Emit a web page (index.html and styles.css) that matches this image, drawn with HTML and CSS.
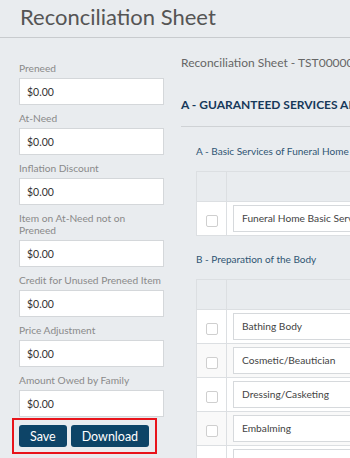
FILE: index.html
```html
<!DOCTYPE html>
<html>

<head>
  <meta name="viewport" content="width=device-width, initial-scale=1">
  <title>Reconciliation Sheet</title>
  <link rel="stylesheet" href="styles.css">
</head>

<body>
  <div class="page-header">
    <h1>Reconciliation Sheet</h1>
  </div>

  <div class="layout">
    <div class="sidebar">
      <div class="field">
        <label>Preneed</label>
        <input type="text" value="$0.00">
      </div>
      <div class="field">
        <label>At-Need</label>
        <input type="text" value="$0.00">
      </div>
      <div class="field">
        <label>Inflation Discount</label>
        <input type="text" value="$0.00">
      </div>
      <div class="field">
        <label>Item on At-Need not on Preneed</label>
        <input type="text" value="$0.00">
      </div>
      <div class="field">
        <label>Credit for Unused Preneed Item</label>
        <input type="text" value="$0.00">
      </div>
      <div class="field">
        <label>Price Adjustment</label>
        <input type="text" value="$0.00">
      </div>
      <div class="field">
        <label>Amount Owed by Family</label>
        <input type="text" value="$0.00">
      </div>

      <div class="actions">
        <button type="button">Save</button>
        <button type="button">Download</button>
      </div>
    </div>

    <div class="content">
      <div class="sheet-title">Reconciliation Sheet - TST0000000001</div>
      <h3 class="section-title">A - GUARANTEED SERVICES AND MERCHANDISE</h3>

      <div class="group-title">A - Basic Services of Funeral Home and Staff</div>
      <table class="items">
        <tr class="head">
          <th class="col-check"></th>
          <th></th>
        </tr>
        <tr>
          <td class="col-check"><span class="check"></span></td>
          <td><div class="item-input">Funeral Home Basic Services</div></td>
        </tr>
      </table>

      <div class="group-title">B - Preparation of the Body</div>
      <table class="items">
        <tr class="head">
          <th class="col-check"></th>
          <th></th>
        </tr>
        <tr>
          <td class="col-check"><span class="check"></span></td>
          <td><div class="item-input">Bathing Body</div></td>
        </tr>
        <tr>
          <td class="col-check"><span class="check"></span></td>
          <td><div class="item-input">Cosmetic/Beautician</div></td>
        </tr>
        <tr>
          <td class="col-check"><span class="check"></span></td>
          <td><div class="item-input">Dressing/Casketing</div></td>
        </tr>
        <tr>
          <td class="col-check"><span class="check"></span></td>
          <td><div class="item-input">Embalming</div></td>
        </tr>
        <tr>
          <td class="col-check"><span class="check"></span></td>
          <td><div class="item-input">Refrigeration</div></td>
        </tr>
      </table>
    </div>
  </div>
</body>

</html>
```

FILE: styles.css
```css
body {
  font-family: Lato, "Open Sans", Arial, sans-serif;
  margin: 0;
  background-color: #e9ecef;
  overflow: hidden;
}

.page-header {
  height: 37px;
  border-bottom: 1px solid #c8cbce;
  padding-left: 20px;
}

h1 {
  margin: 0;
  font-size: 22px;
  font-weight: normal;
  line-height: 34px;
  color: #555;
}

.layout {
  display: flex;
}

.sidebar {
  width: 146px;
  flex-shrink: 0;
  padding: 24px 0 0 19px;
}

.field {
  margin-bottom: 7px;
}

label {
  display: block;
  max-width: 143px;
  font-size: 10.2px;
  line-height: 12px;
  color: #8a8a8a;
  margin-bottom: 4px;
}

input[type="text"] {
  display: block;
  box-sizing: border-box;
  width: 145px;
  height: 27px;
  padding: 0 7px;
  border: 1px solid #d4d7da;
  background-color: #fff;
  font-family: inherit;
  font-size: 10.5px;
  color: #333;
}

.actions {
  display: flex;
  gap: 4px;
  box-sizing: border-box;
  width: 145px;
  height: 36px;
  margin: -6px 0 0 -7px;
  padding: 5px 0 0 5px;
  border: 2px solid #e8141b;
}

button {
  height: 22px;
  padding: 0 11px;
  border: none;
  border-radius: 3px;
  background-color: #0d4467;
  color: #fff;
  font-family: inherit;
  font-size: 12.5px;
}

.content {
  flex: 1;
  padding-left: 16px;
  min-width: 0;
}

.sheet-title {
  margin-top: 18px;
  font-size: 12px;
  line-height: 14px;
  color: #666;
  white-space: nowrap;
}

.section-title {
  margin: 28px 0 0;
  padding-bottom: 14px;
  border-bottom: 1px solid #cfd2d5;
  font-size: 12px;
  line-height: 14px;
  color: #17395a;
  white-space: nowrap;
}

.group-title {
  margin: 18px 0 13px 15px;
  font-size: 10px;
  line-height: 13px;
  color: #2f5573;
  white-space: nowrap;
}

.items + .group-title {
  margin-top: 17px;
  margin-bottom: 13px;
}

.items {
  margin-left: 15px;
  width: 400px;
  border-collapse: collapse;
}

.items th,
.items td {
  border: 1px solid #dcdfe2;
  padding: 0;
}

.items .head th {
  height: 29px;
}

.items td {
  height: 33px;
  background-color: #fff;
}

.items tr:nth-child(odd) td {
  background-color: #f9f9f9;
}

.col-check {
  width: 29px;
  text-align: center;
}

.check {
  display: inline-block;
  width: 10px;
  height: 10px;
  border: 1px solid #cfcfcf;
  border-radius: 2px;
  background-color: #fff;
  vertical-align: middle;
}

.item-input {
  box-sizing: border-box;
  height: 27px;
  margin: 0 0 0 6px;
  padding-left: 8px;
  border: 1px solid #d6d9dc;
  background-color: #fff;
  font-size: 10.2px;
  line-height: 25px;
  color: #444;
  white-space: nowrap;
}
```
